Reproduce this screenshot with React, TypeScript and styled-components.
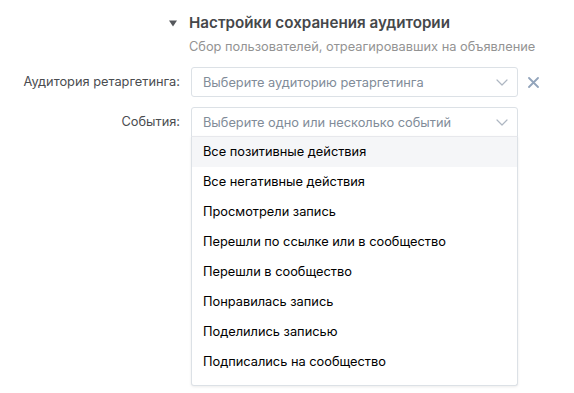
import React from "react";
import styled, { createGlobalStyle } from "styled-components";

const Global = createGlobalStyle`
  html, body { margin: 0; padding: 0; background: #fff; }
  body { font-family: Inter, Roboto, "Liberation Sans", sans-serif; -webkit-font-smoothing: antialiased; }
`;

const Page = styled.div`
  width: 574px;
  height: 393px;
  position: relative;
  overflow: hidden;
  padding-top: 14px;
  box-sizing: border-box;
`;

const Header = styled.div`
  padding-left: 169px;
  display: flex;
  flex-direction: column;
`;

const TitleRow = styled.div`
  display: flex;
  align-items: center;
  gap: 12px;
  height: 18px;
`;

const Title = styled.div`
  font-size: 15.2px;
  font-weight: 600;
  color: #45474a;
  line-height: 18px;
`;

const Subtitle = styled.div`
  margin-top: 6px;
  padding-left: 20px;
  font-size: 12.8px;
  color: #939393;
  line-height: 17px;
`;

const Form = styled.div`
  margin-top: 12px;
  display: flex;
  flex-direction: column;
  gap: 10px;
`;

const Row = styled.div`
  display: flex;
  align-items: flex-start;
`;

const Label = styled.div`
  width: 180px;
  flex: none;
  text-align: right;
  font-size: 12.8px;
  color: #4a4c50;
  line-height: 30px;
`;

const Field = styled.div`
  margin-left: 11px;
  width: 327px;
  flex: none;
  position: relative;
`;

const Select = styled.div<{ $open?: boolean }>`
  box-sizing: border-box;
  height: 30px;
  border: 1px solid #dce1e6;
  border-radius: ${(p) => (p.$open ? "3px 3px 0 0" : "3px")};
  display: flex;
  align-items: center;
  padding: 0 9px 0 11px;
  font-size: 12.8px;
  color: #818c99;
  background: #fff;
`;

const Placeholder = styled.span`
  flex: 1;
`;

const Clear = styled.div`
  margin-left: 10px;
  height: 30px;
  display: flex;
  align-items: center;
`;

const Menu = styled.div`
  position: absolute;
  left: 0;
  right: 0;
  top: 29px;
  box-sizing: border-box;
  border: 1px solid #dce1e6;
  border-top-color: #e7e8ec;
  border-radius: 0 0 3px 3px;
  background: #fff;
  box-shadow: 0 1px 3px rgba(0, 0, 0, 0.08);
  padding-bottom: 8px;
`;

const Item = styled.div<{ $active?: boolean }>`
  height: 30px;
  line-height: 30px;
  padding-left: 11px;
  font-size: 12.8px;
  color: #000;
  background: ${(p) => (p.$active ? "#f5f6f8" : "#fff")};
`;

const Chevron = () => (
  <svg width="12" height="7" viewBox="0 0 12 7" fill="none">
    <path d="M1 1l5 5 5-5" stroke="#aeb7c2" strokeWidth="1.2" strokeLinecap="round" strokeLinejoin="round" />
  </svg>
);

const Triangle = () => (
  <svg width="8" height="7" viewBox="0 0 8 7">
    <path d="M0 0.5h8L4 6.5z" fill="#55585c" />
  </svg>
);

const Cross = () => (
  <svg width="11" height="11" viewBox="0 0 11 11">
    <path d="M1 1l9 9M10 1l-9 9" stroke="#92a4bb" strokeWidth="1.8" strokeLinecap="round" />
  </svg>
);

const items = [
  "Все позитивные действия",
  "Все негативные действия",
  "Просмотрели запись",
  "Перешли по ссылке или в сообщество",
  "Перешли в сообщество",
  "Понравилась запись",
  "Поделились записью",
  "Подписались на сообщество",
];

export default function App() {
  return (
    <Page>
      <Global />
      <Header>
        <TitleRow>
          <Triangle />
          <Title>Настройки сохранения аудитории</Title>
        </TitleRow>
        <Subtitle>Сбор пользователей, отреагировавших на объявление</Subtitle>
      </Header>
      <Form>
        <Row>
          <Label>Аудитория ретаргетинга:</Label>
          <Field>
            <Select>
              <Placeholder>Выберите аудиторию ретаргетинга</Placeholder>
              <Chevron />
            </Select>
          </Field>
          <Clear>
            <Cross />
          </Clear>
        </Row>
        <Row>
          <Label>События:</Label>
          <Field>
            <Select $open>
              <Placeholder>Выберите одно или несколько событий</Placeholder>
              <Chevron />
            </Select>
            <Menu>
              {items.map((t, i) => (
                <Item key={t} $active={i === 0}>
                  {t}
                </Item>
              ))}
            </Menu>
          </Field>
        </Row>
      </Form>
    </Page>
  );
}
